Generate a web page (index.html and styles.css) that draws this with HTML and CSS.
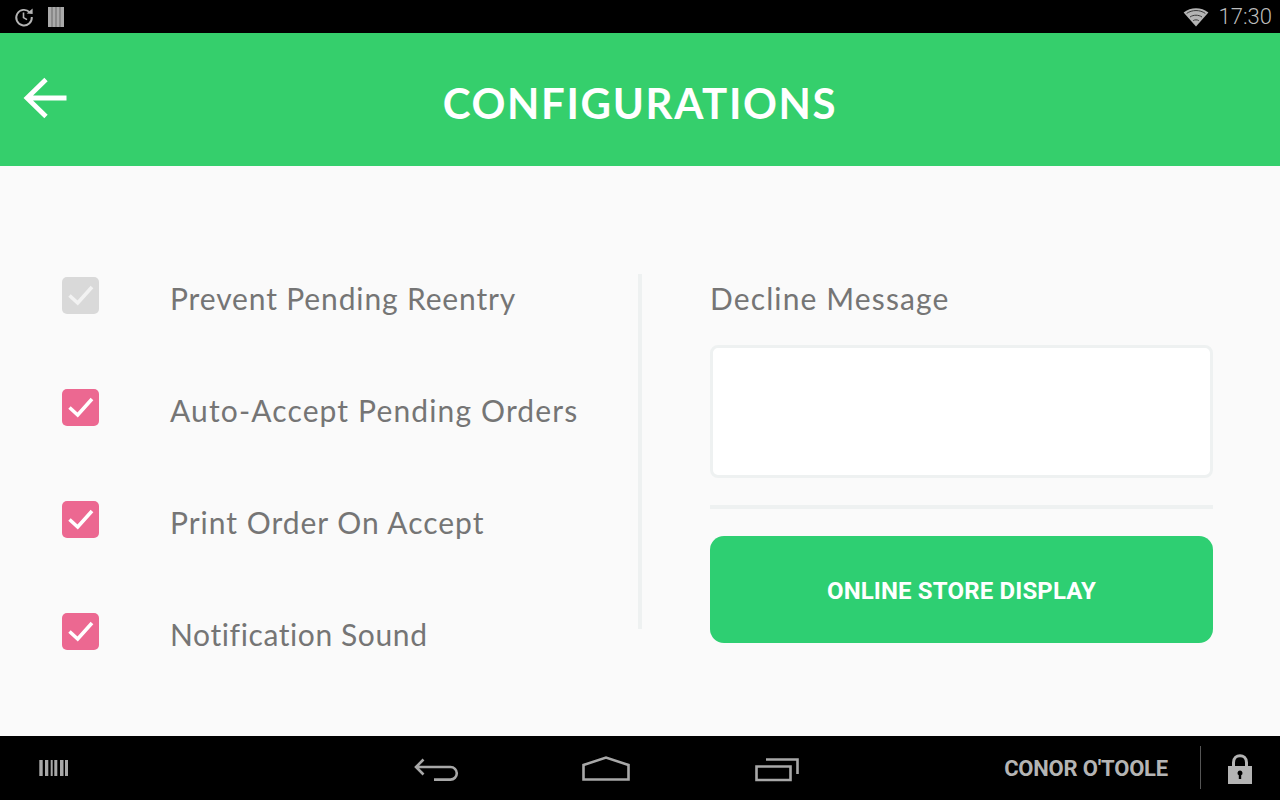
FILE: index.html
```html
<!DOCTYPE html>
<html lang="en">
<head>
<meta charset="utf-8">
<title>Configurations</title>
<link rel="stylesheet" href="styles.css">
</head>
<body>
<div class="screen">
  <div class="status">
    <div class="status-left">
      <svg class="icon-sync" width="22" height="22" viewBox="0 0 22 22"><path d="M16.6 6.2A7.800 7.800 0 1 0 18.800 11" fill="none" stroke="#b4b4b4" stroke-width="1.900"/><path d="M13.600 7.400 19.600 8V2.600Z" fill="#b4b4b4"/><path d="M10.500 6.500V11.600L14 13.600" fill="none" stroke="#b4b4b4" stroke-width="1.600"/></svg>
      <svg class="icon-bars" width="16" height="20" viewBox="0 0 16 20"><rect width="16" height="20" fill="#aaa"/><path d="M4 0V20M8 0V20M12 0V20" stroke="#6a6a6a" stroke-width="1"/></svg>
    </div>
    <div class="status-right">
      <svg width="26" height="20" viewBox="0 0 26 20"><path d="M13 19.500 0.600 5.600C7.500 -0.200 18.500 -0.200 25.400 5.600Z" fill="#b4b4b4"/><path d="M3.700 6.400C9 2.600 17 2.600 22.300 6.400M7 10C10.500 7.600 15.500 7.600 19 10M10.200 13.600C11.800 12.600 14.200 12.600 15.800 13.600" fill="none" stroke="#3a3a3a" stroke-width="1"/></svg>
      <span class="clock">17:30</span>
    </div>
  </div>
  <header class="header">
    <svg class="back" width="44" height="44" viewBox="0 0 44 44"><path d="M43.500 22H3.500M23 3.500 4 22 23 40.500" fill="none" stroke="#fff" stroke-width="4.800"/></svg>
    <h1 class="title">CONFIGURATIONS</h1>
  </header>
  <main class="main">
    <section class="options">
      <div class="option">
        <span class="box box-off"><svg width="37" height="37" viewBox="0 0 37 37"><path d="M7.500 18.500 15.700 26 30 10" fill="none" stroke="#f2f2f2" stroke-width="3.600"/></svg></span>
        <span class="label label-prevent">Prevent Pending Reentry</span>
      </div>
      <div class="option">
        <span class="box"><svg width="37" height="37" viewBox="0 0 37 37"><path d="M7.500 18.500 15.700 26 30 10" fill="none" stroke="#fff" stroke-width="3.600"/></svg></span>
        <span class="label label-auto">Auto-Accept Pending Orders</span>
      </div>
      <div class="option">
        <span class="box"><svg width="37" height="37" viewBox="0 0 37 37"><path d="M7.500 18.500 15.700 26 30 10" fill="none" stroke="#fff" stroke-width="3.600"/></svg></span>
        <span class="label label-print">Print Order On Accept</span>
      </div>
      <div class="option">
        <span class="box"><svg width="37" height="37" viewBox="0 0 37 37"><path d="M7.500 18.500 15.700 26 30 10" fill="none" stroke="#fff" stroke-width="3.600"/></svg></span>
        <span class="label">Notification Sound</span>
      </div>
    </section>
    <div class="divider"></div>
    <section class="panel">
      <div class="label panel-label">Decline Message</div>
      <div class="message"></div>
      <div class="rule"></div>
      <button class="store-btn">ONLINE STORE DISPLAY</button>
    </section>
  </main>
  <nav class="nav">
    <svg class="nav-barcode" width="30" height="16" viewBox="0 0 30 16"><path d="M0.300 0H3.700V16H0.300ZM6 0H9.300V16H6ZM11.700 0H13.700V16H11.700ZM15.300 0H18.300V16H15.300ZM21 0H24.500V16H21ZM26 0H29V16H26Z" fill="#a8a8a8"/></svg>
    <div class="nav-center">
      <svg width="46" height="26" viewBox="0 0 46 26"><path d="M10.500 3.500 3 11 10.500 18.500M3 11H37.500A6.300 6.300 0 0 1 37.500 23.600H21" fill="none" stroke="#a8a8a8" stroke-width="2.600"/></svg>
      <svg width="48" height="26" viewBox="0 0 48 26"><path d="M1.500 23.500V9L24 1.500 46.500 9V23.500Z" fill="none" stroke="#a8a8a8" stroke-width="2.600"/></svg>
      <svg width="46" height="26" viewBox="0 0 46 26"><path d="M1.500 10.500H35.500V24H1.500ZM11 3.500H42.500V18" fill="none" stroke="#a8a8a8" stroke-width="2.600"/></svg>
    </div>
    <div class="nav-right">
      <span class="user">CONOR O'TOOLE</span>
      <span class="nav-sep"></span>
      <svg class="lock" width="24" height="30" viewBox="0 0 24 30"><path d="M5.500 13V8.500C5.500 -0.500 18.500 -0.500 18.500 8.500V13" fill="none" stroke="#b4b4b4" stroke-width="3"/><path fill-rule="evenodd" d="M0 12H24V30H0ZM12 16.500A2.500 2.500 0 0 0 10.800 21.200V25H13.200V21.200A2.500 2.500 0 0 0 12 16.500Z" fill="#b4b4b4"/></svg>
    </div>
  </nav>
</div>
</body>
</html>
```

FILE: styles.css
```css
* { box-sizing: border-box; }
html, body { margin: 0; padding: 0; }
body { background: #000; font-family: "Lato", sans-serif; }
.screen { width: 1280px; height: 800px; display: flex; flex-direction: column; overflow: hidden; }

.status { height: 33px; background: #000; display: flex; align-items: center; justify-content: space-between; padding: 0 8px 0 13px; }
.status-left { display: flex; align-items: center; gap: 13px; }
.status-right { display: flex; align-items: center; gap: 10px; }
.clock { font-family: "Roboto", sans-serif; font-size: 22px; color: #bcbcbc; font-weight: 300; }

.header { height: 133px; background: #35cf6c; position: relative; display: flex; align-items: center; justify-content: center; }
.back { position: absolute; left: 23px; top: 43px; }
.title { margin: 0; color: #fff; font-family: "Lato", sans-serif; font-weight: 700; font-size: 42px; letter-spacing: 1.65px; line-height: 1; position: relative; top: 3px; }

.main { height: 570px; background: #fafafa; display: flex; align-items: flex-start; padding: 108px 67px 0 62px; }
.options { width: 576px; display: flex; flex-direction: column; gap: 75px; margin-top: 1px; }
.option { display: flex; align-items: flex-start; height: 37px; }
.box { width: 37px; height: 37px; border-radius: 5px; background: #ec6891; flex: none; margin-top: 2px; margin-right: 71px; display: block; }
.box svg { display: block; }
.box-off { background: #d9d9d9; }
.label { font-family: "Lato", sans-serif; font-size: 30px; font-weight: 400; color: #757575; line-height: 46px; letter-spacing: 0.6px; white-space: nowrap; }
.label-prevent { letter-spacing: 0.86px; }
.label-auto { letter-spacing: 1.14px; }
.label-print { letter-spacing: 0.98px; }

.divider { width: 4px; height: 355px; background: #eef1f1; flex: none; }
.panel { margin-left: 68px; width: 503px; display: flex; flex-direction: column; margin-top: 1px; }
.panel-label { margin-bottom: 24px; letter-spacing: 1.13px; }
.message { height: 133px; background: #fff; border: 3px solid #eef1f1; border-radius: 8px; }
.rule { height: 4px; background: #eef1f1; margin-top: 27px; }
.store-btn { height: 107px; margin-top: 27px; background: #2ecf72; border: 0; border-radius: 14px; color: #fff; font-family: "Roboto", sans-serif; font-weight: 700; font-size: 24px; letter-spacing: 0.15px; padding: 2px 0 0; }

.nav { height: 64px; background: #000; display: flex; align-items: center; position: relative; padding-left: 39px; }
.nav-barcode { flex: none; }
.nav-center { position: absolute; left: 413px; top: 20px; display: flex; align-items: flex-start; }
.nav-center svg:nth-child(2) { margin-left: 123px; }
.nav-center svg:nth-child(3) { margin-left: 125px; }
.nav-right { position: absolute; right: 28px; top: 10px; height: 43px; display: flex; align-items: center; }
.user { font-family: "Roboto", sans-serif; font-weight: 700; font-size: 22px; letter-spacing: -0.2px; color: #b4b4b4; margin-top: 1px; }
.nav-sep { width: 1px; height: 43px; background: #555; margin: 0 27px 0 32px; }
.lock { margin-top: 2px; }
```
